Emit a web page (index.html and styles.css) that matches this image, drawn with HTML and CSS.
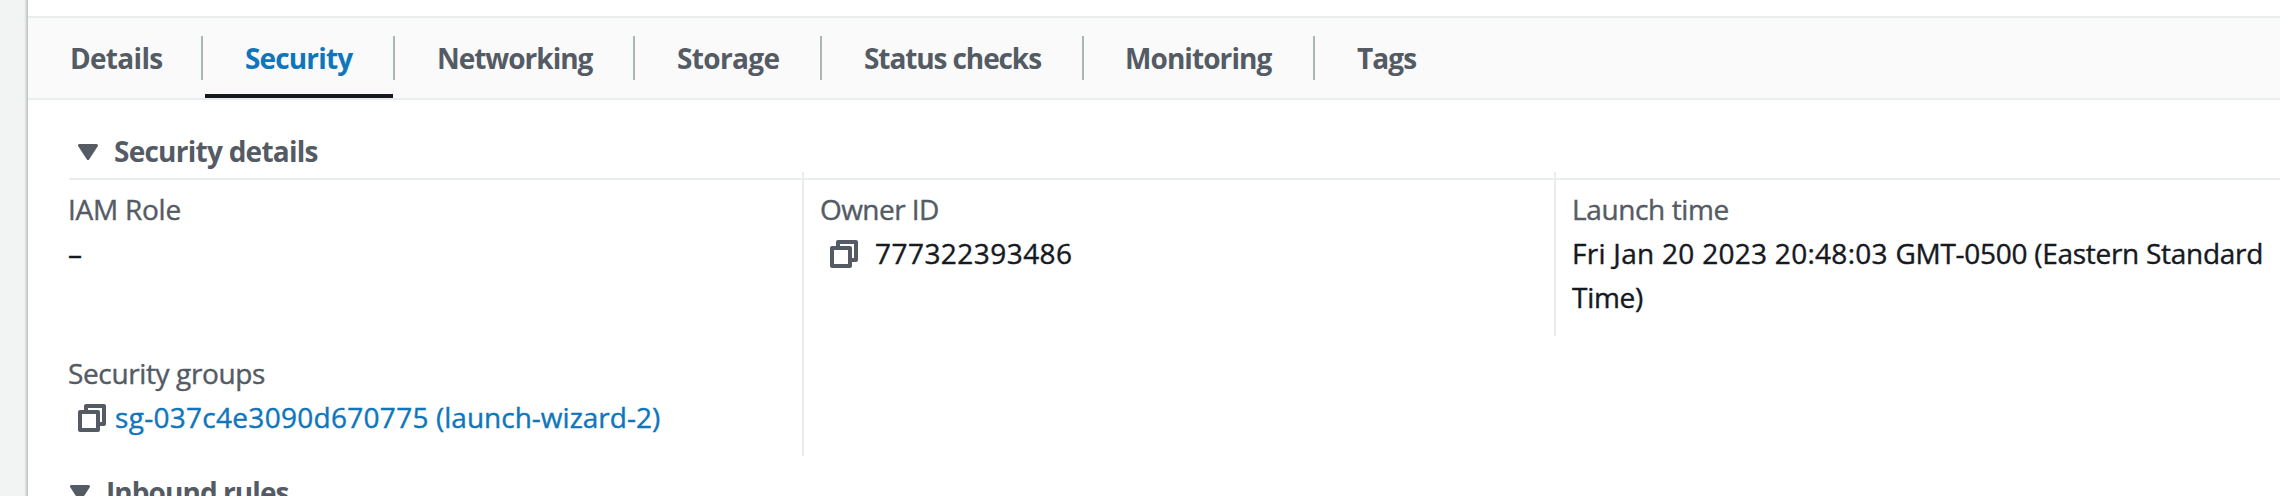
FILE: index.html
```
<!DOCTYPE html>
<html lang="en">
<head>
<meta charset="utf-8">
<title>Instance security</title>
<link rel="stylesheet" href="styles.css">
</head>
<body>
<svg class="defs" aria-hidden="true">
  <symbol id="copy" viewBox="0 0 28 28"><path d="M8 8V2h18v18h-6" fill="none" stroke="currentColor" stroke-width="4" stroke-linejoin="round"/><path d="M2 8h18v18H2z" fill="#fff" stroke="currentColor" stroke-width="4" stroke-linejoin="round"/></symbol>
  <symbol id="caret" viewBox="0 0 20 16"><path d="M1.5 1.5h17L10 14.5z" fill="currentColor" stroke="currentColor" stroke-width="3" stroke-linejoin="round"/></symbol>
</svg>
<div class="page">
  <div class="gutter"></div>
  <main class="panel">
    <nav class="tabs">
      <a class="tab tab-details"><span>Details</span></a>
      <a class="tab tab-security active"><span>Security</span></a>
      <a class="tab tab-networking"><span>Networking</span></a>
      <a class="tab tab-storage"><span>Storage</span></a>
      <a class="tab tab-status"><span>Status checks</span></a>
      <a class="tab tab-monitoring"><span>Monitoring</span></a>
      <a class="tab tab-tags"><span>Tags</span></a>
    </nav>
    <h2 class="section-title"><svg class="caret"><use href="#caret"/></svg><span>Security details</span></h2>
    <div class="details">
      <div class="column column-role">
        <div class="label label-role">IAM Role</div>
        <div class="value value-empty">–</div>
        <div class="label label-groups">Security groups</div>
        <div class="value value-groups"><svg class="copy"><use href="#copy"/></svg><a class="link"><span class="group-id">sg-037c4e3090d670775</span> (launch-wizard-2)</a></div>
      </div>
      <div class="column column-owner">
        <div class="label label-owner">Owner ID</div>
        <div class="value value-owner"><svg class="copy"><use href="#copy"/></svg><span>777322393486</span></div>
      </div>
      <div class="column column-launch">
        <div class="label label-launch">Launch time</div>
        <div class="value value-launch"><span class="date">Fri Jan 20 2023 20:48:03 </span>GMT-0500 (Eastern Standard Time)</div>
      </div>
    </div>
    <h2 class="section-title inbound"><svg class="caret"><use href="#caret"/></svg><span>Inbound rules</span></h2>
  </main>
</div>
</body>
</html>
```
FILE: styles.css
```
* { box-sizing: border-box; }
body {
  margin: 0;
  overflow: hidden;
  background: #fff;
  color: #16191f;
  font: 28px/44px "Open Sans", "Noto Sans", sans-serif;
}
.defs { position: absolute; width: 0; height: 0; }
.page { display: flex; height: 496px; overflow: hidden; }
.gutter {
  width: 28px;
  flex: none;
  background: linear-gradient(90deg, #f2f3f3 0 24px, #eaeded 25px, #d5dbdb 26px, #b8c0c1 28px);
}
.panel { flex: 1; min-width: 0; padding-top: 16px; }

.tabs {
  display: flex;
  height: 84px;
  background: #fafafa;
  border-top: 2px solid #eaeded;
  border-bottom: 2px solid #eaeded;
}
.tab {
  position: relative;
  flex: none;
  height: 80px;
  padding: 18px 0 18px 42px;
  color: #545b64;
  font-weight: 700;
  line-height: 44px;
  white-space: nowrap;
}
.tab span {
  display: block;
  height: 44px;
  border-right: 2px solid #aab7b8;
}
.tab-details { width: 175px; letter-spacing: -0.7px; }
.tab-security { width: 192px; letter-spacing: -0.85px; }
.tab-networking { width: 240px; letter-spacing: -1.03px; }
.tab-storage { width: 187px; letter-spacing: -0.65px; }
.tab-status { width: 262px; letter-spacing: -1.1px; }
.tab-monitoring { width: 231px; padding-left: 41px; letter-spacing: -0.93px; }
.tab-tags { letter-spacing: -0.9px; }
.tab-tags span { border: 0; }
.tab.active { color: #0f76bb; }
.tab.active::after {
  content: "";
  position: absolute;
  left: 2px;
  right: 2px;
  bottom: 0;
  height: 4px;
  background: #16191f;
}

.section-title {
  display: flex;
  height: 51px;
  margin: 29px 0 0 41px;
  padding-left: 9px;
  border-bottom: 2px solid #eaeded;
  color: #545b64;
  font-size: 28px;
  line-height: 45px;
  letter-spacing: -0.75px;
}
.caret { flex: none; width: 20px; height: 16px; margin: 15px 16px 0 0; }

.details { display: flex; height: 284px; margin-top: -8px; }
.column {
  flex: none;
  padding-top: 15px;
  -webkit-text-stroke: 0.4px currentColor;
}
.column-role { width: 774px; padding-left: 40px; }
.column-owner { width: 752px; height: 284px; padding-left: 16px; border-left: 2px solid #eaeded; }
.column-launch { width: 726px; height: 164px; padding-left: 16px; border-left: 2px solid #eaeded; }
.label { color: #545b64; white-space: nowrap; }
.label-role { letter-spacing: -0.25px; }
.label-groups { margin-top: 76px; letter-spacing: -0.37px; }
.label-owner { letter-spacing: -0.56px; }
.label-launch { letter-spacing: -0.38px; }
.value-groups, .value-owner { display: flex; padding-left: 10px; }
.value-owner { letter-spacing: 0.45px; }
.value-launch { letter-spacing: -0.28px; }
.date { letter-spacing: 0.28px; }
.group-id { letter-spacing: 0.29px; }
.copy { flex: none; width: 28px; height: 28px; margin: 9px 9px 0 0; color: #545b64; }
.value-owner .copy { margin-right: 17px; }
.link { color: #0f76bb; white-space: nowrap; }

.inbound {
  margin-top: 14px;
  margin-left: 42px;
  padding-left: 0;
  border: 0;
  letter-spacing: -0.93px;
}
```
